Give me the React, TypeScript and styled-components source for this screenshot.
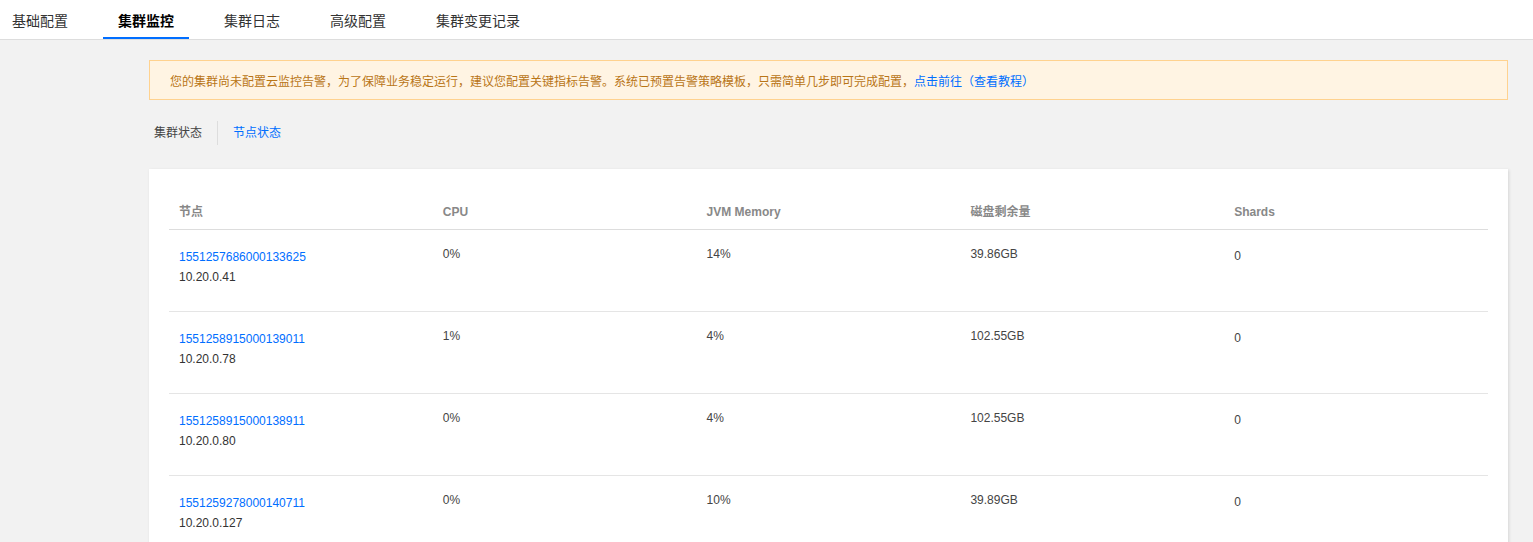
import React from "react";
import styled, { createGlobalStyle } from "styled-components";

const Global = createGlobalStyle`
  html, body {
    margin: 0;
    padding: 0;
    background: #f2f2f2;
    font-family: "Liberation Sans", "Noto Sans CJK SC", sans-serif;
    color: #333;
  }
  * { box-sizing: border-box; }
`;

const TopBar = styled.div`
  display: flex;
  height: 40px;
  background: #fff;
  border-bottom: 1px solid #ddd;
`;

const Tab = styled.div<{ $active?: boolean; $first?: boolean }>`
  position: relative;
  height: 39px;
  display: flex;
  align-items: center;
  padding: 2px 15px 0 ${(p) => (p.$first ? "12px" : "15px")};
  margin-right: 20px;
  font-size: 14px;
  color: ${(p) => (p.$active ? "#000" : "#333")};
  font-weight: ${(p) => (p.$active ? 700 : 400)};
  border-bottom: 2px solid ${(p) => (p.$active ? "#006eff" : "transparent")};
`;

const Main = styled.div`
  padding: 20px 25px 0 149px;
`;

const Alert = styled.div`
  height: 40px;
  display: flex;
  align-items: center;
  padding: 0 20px;
  background: #fff4e3;
  border: 1px solid #ffd28f;
  font-size: 12px;
  color: #b97516;
`;

const Link = styled.a`
  color: #006eff;
  text-decoration: none;
  cursor: pointer;
`;

const SubTabs = styled.div`
  display: flex;
  align-items: center;
  height: 24px;
  margin-top: 21px;
`;

const SubTab = styled.div<{ $active?: boolean; $first?: boolean }>`
  font-size: 12px;
  line-height: 24px;
  padding: 0 15px 0 ${(p) => (p.$first ? "5px" : "15px")};
  color: ${(p) => (p.$active ? "#006eff" : "#444")};
  & + & {
    border-left: 1px solid #ddd;
  }
`;

const Card = styled.div`
  margin-top: 24px;
  background: #fff;
  padding: 20px 20px 40px;
  box-shadow: 1px 1px 3px rgba(0, 0, 0, 0.12);
`;

const Row = styled.div<{ $head?: boolean }>`
  display: grid;
  grid-template-columns: repeat(5, 1fr);
  border-bottom: 1px solid ${(p) => (p.$head ? "#ddd" : "#e5e5e5")};
  min-height: ${(p) => (p.$head ? "41px" : "82px")};
`;

const Th = styled.div`
  padding: 14px 10px 8px;
  line-height: 18px;
  font-size: 12px;
  font-weight: 700;
  color: #888;
`;

const Td = styled.div<{ $lh?: number }>`
  padding: 17px 10px 10px;
  font-size: 12px;
  line-height: ${(p) => p.$lh ?? 14}px;
  color: #444;
`;

const NodeId = styled.div`
  color: #006eff;
  line-height: 20px;
`;

const NodeIp = styled.div`
  color: #333;
  line-height: 20px;
`;

const tabs = ["基础配置", "集群监控", "集群日志", "高级配置", "集群变更记录"];

const rows = [
  { id: "1551257686000133625", ip: "10.20.0.41", cpu: "0%", jvm: "14%", disk: "39.86GB", shards: "0" },
  { id: "1551258915000139011", ip: "10.20.0.78", cpu: "1%", jvm: "4%", disk: "102.55GB", shards: "0" },
  { id: "1551258915000138911", ip: "10.20.0.80", cpu: "0%", jvm: "4%", disk: "102.55GB", shards: "0" },
  { id: "1551259278000140711", ip: "10.20.0.127", cpu: "0%", jvm: "10%", disk: "39.89GB", shards: "0" },
];

export default function App() {
  return (
    <>
      <Global />
      <TopBar>
        {tabs.map((t, i) => (
          <Tab key={t} $first={i === 0} $active={i === 1}>
            {t}
          </Tab>
        ))}
      </TopBar>
      <Main>
        <Alert>
          您的集群尚未配置云监控告警，为了保障业务稳定运行，建议您配置关键指标告警。系统已预置告警策略模板，只需简单几步即可完成配置，
          <Link>点击前往（查看教程）</Link>
        </Alert>
        <SubTabs>
          <SubTab $first>集群状态</SubTab>
          <SubTab $active>节点状态</SubTab>
        </SubTabs>
        <Card>
          <Row $head>
            <Th>节点</Th>
            <Th>CPU</Th>
            <Th>JVM Memory</Th>
            <Th>磁盘剩余量</Th>
            <Th>Shards</Th>
          </Row>
          {rows.map((r) => (
            <Row key={r.id}>
              <Td $lh={20}>
                <NodeId>{r.id}</NodeId>
                <NodeIp>{r.ip}</NodeIp>
              </Td>
              <Td>{r.cpu}</Td>
              <Td>{r.jvm}</Td>
              <Td>{r.disk}</Td>
              <Td $lh={18}>{r.shards}</Td>
            </Row>
          ))}
        </Card>
      </Main>
    </>
  );
}
